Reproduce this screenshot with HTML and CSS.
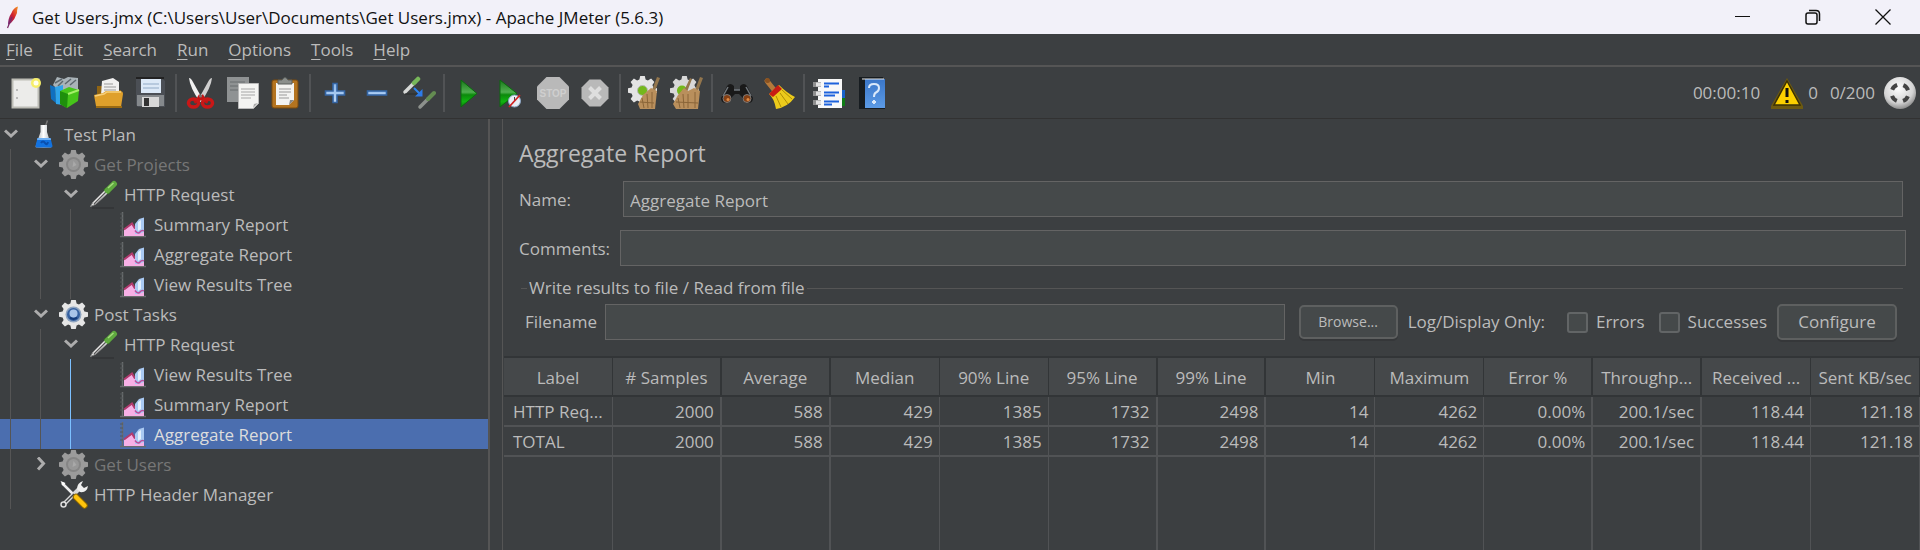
FILE: index.html
```html
<!DOCTYPE html>
<html lang="en">
<head>
<meta charset="utf-8">
<title>Get Users.jmx - Apache JMeter (5.6.3)</title>
<link rel="stylesheet" href="styles.css">
</head>
<body>
<svg class="defs" aria-hidden="true">
  <defs>
    <linearGradient id="g-green" x1="0" y1="0" x2="0" y2="1"><stop offset="0" stop-color="#1a7a1a"/><stop offset=".45" stop-color="#4fae4f"/><stop offset=".55" stop-color="#0b8a0b"/><stop offset=".8" stop-color="#10b410"/><stop offset="1" stop-color="#0c7a0c"/></linearGradient>
    <linearGradient id="g-blue" x1="0" y1="0" x2="0" y2="1"><stop offset="0" stop-color="#8db8ea"/><stop offset="1" stop-color="#bcd8f8"/></linearGradient>
    <linearGradient id="g-cover" x1="0" y1="0" x2="0" y2="1"><stop offset="0" stop-color="#3a76c8"/><stop offset="1" stop-color="#5c9be6"/></linearGradient>
    <radialGradient id="g-ball" cx=".45" cy=".35" r=".65"><stop offset="0" stop-color="#fff"/><stop offset=".7" stop-color="#d4d4d4"/><stop offset="1" stop-color="#8e8e8e"/></radialGradient>
    <linearGradient id="g-glass" x1="0" y1="0" x2="1" y2="0"><stop offset="0" stop-color="#9aa5ad"/><stop offset=".5" stop-color="#fff"/><stop offset="1" stop-color="#a9b4bc"/></linearGradient>
    <linearGradient id="g-feather" x1="1" y1="0" x2="0" y2="1"><stop offset="0" stop-color="#f79a23"/><stop offset=".5" stop-color="#d1202f"/><stop offset="1" stop-color="#6a2a86"/></linearGradient>
    <g id="cog"><path d="M12.200 0h4.600l.8 3.600 2.300 1 3.200-2 3.300 3.300-2 3.200 1 2.300 3.600.8v4.600l-3.600.8-1 2.300 2 3.200-3.300 3.300-3.200-2-2.300 1-.8 3.600h-4.600l-.8-3.600-2.300-1-3.200 2-3.300-3.300 2-3.200-1-2.300L0 16.800v-4.600l3.600-.8 1-2.300-2-3.200 3.300-3.300 3.200 2 2.300-1z"/></g>
    <symbol id="i-chevron" viewBox="0 0 14 14"><path d="M1 3.500l6 5.500 6-5.500" fill="none" stroke="#adadad" stroke-width="3"/></symbol>
    <symbol id="i-chevron-r" viewBox="0 0 14 14"><path d="M4 .500l5.500 6-5.500 6" fill="none" stroke="#adadad" stroke-width="3"/></symbol>
    <symbol id="i-flask" viewBox="0 0 29 29"><path d="M16.500 6l2-5.500" stroke="#777" stroke-width="1.500"/><path d="M11.500 5h6.500v7l4.500 14.500q0 1-1 1h-14q-1 0-1-1L11.500 12z" fill="url(#g-glass)"/><path d="M8.500 18h13l2 8q0 1.500-1.500 1.500H8q-1.500 0-1.500-1.500z" fill="#1272e0"/><path d="M8.500 18h13l.5 2H8z" fill="#6fb1f5"/><path d="M12 23q2-3 4 0t3-1" stroke="#0a4fae" stroke-width="2" fill="none"/></symbol>
    <symbol id="i-cog" viewBox="0 0 29 29"><use href="#cog" fill="#e6e6e6"/><circle cx="14.500" cy="14.500" r="8" fill="#8ea4c0"/><circle cx="14.500" cy="14.500" r="6.500" fill="#35609f"/><circle cx="14.500" cy="13.500" r="4" fill="#a9c4e8"/><path d="M11 17.500q3.500 3 7 0" stroke="#143a78" stroke-width="2" fill="none"/></symbol>
    <symbol id="i-cog-off" viewBox="0 0 29 29"><use href="#cog" fill="#9b9b9b"/><circle cx="14.500" cy="14.500" r="7.500" fill="#858585"/><circle cx="14.500" cy="14.500" r="5.500" fill="#979797"/><path d="M14.500 11l3 4-4 2z" fill="#a9a9a9"/></symbol>
    <symbol id="i-pipette" viewBox="0 0 29 29"><path d="M3 28h22" stroke="#2c2f30"/><path d="M1.500 26.500L4 22 16 10l3 3L7 24z" fill="#e8e8e8" stroke="#8a8a8a"/><path d="M5 24L17 12" stroke="#555" stroke-width="1.200"/><path d="M15.500 8.500l5 5" stroke="#2f6b22" stroke-width="3"/><path d="M18.500 10.500L25 4" stroke="#5faa3f" stroke-width="6" stroke-linecap="round"/><path d="M19 8l5.500-5" stroke="#a5dc7c" stroke-width="1.500"/></symbol>
    <symbol id="i-chart" viewBox="0 0 29 29"><path d="M3.500 2v25M1 26.500h26" stroke="#696c6e" stroke-width="1.500"/><path d="M1 4h3M1 8h3M1 12h3M1 16h3M1 20h3" stroke="#55585a"/><path d="M5 26V20l4-3 4-3 3 5 4 0 5-3v10z" fill="#f7b0e6"/><path d="M5 19.500l4-3 4-3 3 5" fill="none" stroke="#b23a6e" stroke-width="2"/><path d="M16 24V14l4-5 5-1.500V22l-5 2z" fill="#a9c9f2"/><path d="M19 21v-9l3-2v9z" fill="#e2effc"/><path d="M16 20.500q3 4 5 1.500t4-1" fill="none" stroke="#bf4a9a" stroke-width="1.500"/></symbol>
    <symbol id="i-tools" viewBox="0 0 29 29"><path d="M3 3l11 11" stroke="#eee" stroke-width="2.500"/><path d="M1.500 1l5 2-2.500 3z" fill="#fff"/><path d="M4 25L22 7" stroke="#d8d8d8" stroke-width="4"/><path d="M4.500 24.500L15 14" stroke="#3d4042" stroke-width="1.500"/><circle cx="4.500" cy="24.500" r="2.500" fill="#3d4042" stroke="#ddd" stroke-width="1.500"/><path d="M18 9q0-6 6-8l-2 4 3 3 4-2q-1 7-8 6z" fill="#efefef"/><path d="M17 17l8.500 8.500" stroke="#8a6500" stroke-width="6.500" stroke-linecap="round"/><path d="M17 17l8.500 8.500" stroke="#ffc40d" stroke-width="4.500" stroke-linecap="round"/></symbol>
  </defs>
</svg>

<header class="titlebar">
  <svg class="feather" viewBox="0 0 14 24" aria-hidden="true"><path d="M2 20Q2 13 5.500 8q2-5.500 6.500-6.500-1 3-1 6.500-2 6-6 10z" fill="url(#g-feather)"/><path d="M1.500 23L6 12" stroke="#7a2a66" stroke-width="1.200"/></svg>
  <h1 class="window-title">Get Users.jmx (C:\Users\User\Documents\Get Users.jmx) - Apache JMeter (5.6.3)</h1>
  <div class="window-controls">
    <button class="win-btn" aria-label="Minimize"><svg viewBox="0 0 16 16"><path d="M0 7.500h15" stroke="#111"/></svg></button>
    <button class="win-btn" aria-label="Restore"><svg viewBox="0 0 16 16" fill="none" stroke="#111" stroke-width="1.500"><rect x="1" y="4" width="11" height="11" rx="2"/><path d="M4 1.500h7q3.500 0 3.500 3.500v7"/></svg></button>
    <button class="win-btn" aria-label="Close"><svg viewBox="0 0 16 16"><path d="M.5.500l15 15M15.500.500l-15 15" stroke="#111" stroke-width="1.300"/></svg></button>
  </div>
</header>

<nav class="menubar" aria-label="Main menu">
  <button class="menu"><u>F</u>ile</button>
  <button class="menu"><u>E</u>dit</button>
  <button class="menu"><u>S</u>earch</button>
  <button class="menu"><u>R</u>un</button>
  <button class="menu"><u>O</u>ptions</button>
  <button class="menu"><u>T</u>ools</button>
  <button class="menu"><u>H</u>elp</button>
</nav>

<div class="toolbar" role="toolbar" aria-label="Tools">
  <div class="tool-group">
    <button class="tool" aria-label="New"><svg viewBox="0 0 34 34"><rect x="4.500" y="3.500" width="26" height="28" fill="#ececea" stroke="#bdbdb6" stroke-width="2"/><path d="M8 14h2M8 22h2" stroke="#888"/><circle cx="28" cy="7" r="5" fill="#f6ee6a"/><circle cx="28" cy="7" r="2.500" fill="#fffff0"/></svg></button>
    <button class="tool" aria-label="Templates"><svg viewBox="0 0 34 34"><path d="M3 9l4-8 7 2 4-2 10 1v14L14 20z" fill="#a9b3b8"/><path d="M5 7l7-4M15 8l6-5M8 10l5-5M20 9l6-5" stroke="#5d686e" stroke-width="1.500"/><path d="M0 9l5 2 1 16-5-4z" fill="#0f6fc0"/><path d="M5 11l8-2v20l-7-1z" fill="#2fa4ea"/><path d="M10 15l9-4 10 3-1 11-11 7-7-4z" fill="#46c41a"/><path d="M10 15l8 3-1 14-7-4z" fill="#1f8f0c"/><path d="M18 18l11-4" stroke="#a5ef6a" stroke-width="2"/></svg></button>
    <button class="tool" aria-label="Open"><svg viewBox="0 0 34 34"><path d="M5 10h6l2 4h16v4H5z" fill="#8f6414"/><path d="M10 5l11-3 6 4v13H9z" fill="#f0f0f0"/><path d="M12 8h9M12 11h12M12 14h12" stroke="#999"/><path d="M2 19l9-2 3-2h14q3 0 3 3l-2 13q0 1-2 1H6q-2 0-2-2z" fill="#dfa02b"/><path d="M3 20l9-2 3-2h14" stroke="#f7cf7a" stroke-width="1.500" fill="none"/><path d="M4 31h26" stroke="#9a6a12" stroke-width="2"/></svg></button>
    <button class="tool" aria-label="Save"><svg viewBox="0 0 34 34"><path d="M2 3h27l2 2v26H4l-2-2z" fill="#4b4f55"/><path d="M3 19h27v11H3z" fill="#85898c"/><rect x="7" y="3" width="20" height="14" fill="#dce9f7"/><path d="M9 8h16M9 12h16" stroke="#91aac6"/><path d="M2 2h28" stroke="#222" stroke-width="2"/><rect x="8" y="21" width="17" height="10" fill="#d8d8d8"/><rect x="10" y="22" width="5" height="8" fill="#333"/></svg></button>
  </div>
  <div class="tool-group">
    <button class="tool" aria-label="Cut"><svg viewBox="0 0 34 34"><path d="M5 2q2 0 4 4l10 18-3 2Q6 12 5 2z" fill="#f1f1f1"/><path d="M28 2q-2 0-4 4L14 24l3 2Q27 12 28 2z" fill="#cfcfcf"/><path d="M14 20l10 6M20 20L10 26" stroke="#c31414" stroke-width="4"/><ellipse cx="9.500" cy="27" rx="5" ry="4" fill="none" stroke="#c91717" stroke-width="3.500"/><ellipse cx="23.500" cy="27" rx="5" ry="4" fill="none" stroke="#c91717" stroke-width="3.500"/><circle cx="16.500" cy="20" r="1.500" fill="#777"/></svg></button>
    <button class="tool" aria-label="Copy"><svg viewBox="0 0 34 34"><rect x="1" y="1" width="22" height="25" fill="#8f9293"/><path d="M4 6h15M4 10h8M4 14h8" stroke="#696c6e"/><path d="M12.500 7.500h20v20l-5 5h-15z" fill="#f4f4f2" stroke="#b9b9b9"/><path d="M15 13h14M15 16h14M15 19h14M15 22h10" stroke="#a6a6a6"/><path d="M27 32l1-4 4-1z" fill="#aaa"/></svg></button>
    <button class="tool" aria-label="Paste"><svg viewBox="0 0 34 34"><rect x="4" y="4" width="26" height="28" rx="2" fill="#b47420" stroke="#7b4a0c"/><path d="M8 7h18v17l-5 5H8z" fill="#f3f3f1"/><path d="M11 13h12M11 16h12M11 19h8M11 22h10" stroke="#999"/><path d="M21 29l1-5h4z" fill="#888"/><path d="M10 4h4q3-5 6 0h4v4H10z" fill="#8b8f8c" stroke="#5b5f5c"/></svg></button>
  </div>
  <div class="tool-group">
    <button class="tool" aria-label="Expand all"><svg viewBox="0 0 34 34"><path d="M15 7.500h4v7.500h7.500v4H19v7.500h-4V19H7.500v-4H15z" fill="url(#g-blue)" stroke="#3465a4" stroke-width="1.600"/></svg></button>
    <button class="tool" aria-label="Collapse all"><svg viewBox="0 0 34 34"><rect x="7.500" y="15" width="19" height="4" fill="url(#g-blue)" stroke="#3465a4" stroke-width="1.600"/></svg></button>
    <button class="tool" aria-label="Toggle"><svg viewBox="0 0 34 34"><path d="M3 16L13 6" stroke="#d7d9d7" stroke-width="3.500" stroke-linecap="round"/><path d="M12 7l4-4" stroke="#78b85a" stroke-width="4.500" stroke-linecap="round"/><path d="M3 18h14" stroke="#292c2d"/><path d="M12 12l6 6" stroke="#2e86f0" stroke-width="2"/><path d="M20.500 13v7.500H13z" fill="#2e7be8"/><path d="M18 31l8-8" stroke="#8d918d" stroke-width="3.500" stroke-linecap="round"/><path d="M26 23l6-6" stroke="#648c51" stroke-width="4" stroke-linecap="round"/></svg></button>
  </div>
  <div class="tool-group">
    <button class="tool" aria-label="Start"><svg viewBox="0 0 34 34"><path d="M9 4l16 13.500L9 31z" fill="url(#g-green)" stroke="#0a6b0e"/></svg></button>
    <button class="tool" aria-label="Start no pauses"><svg viewBox="0 0 34 34"><path d="M6 4l17 13.500L6 31z" fill="url(#g-green)" stroke="#0a6b0e"/><circle cx="20.500" cy="25" r="6" fill="#e8eef6" stroke="#8ca6c4"/><path d="M20.500 25v-4" stroke="#444"/><path d="M15 31l11-12" stroke="#d02424" stroke-width="1.800"/></svg></button>
    <button class="tool" aria-label="Stop" disabled><svg viewBox="0 0 34 34"><path d="M10.500 1h13l9.500 9.500v13L23.500 33h-13L1 23.500v-13z" fill="#b9b9b9"/><text x="17" y="21" class="stop-text">STOP</text></svg></button>
    <button class="tool" aria-label="Shutdown" disabled><svg viewBox="0 0 34 34"><path d="M11.500 3.500h11l8 8v11l-8 8h-11l-8-8v-11z" fill="#b9b9b9"/><path d="M11.500 11.500l11 11M22.500 11.500l-11 11" stroke="#dedede" stroke-width="4"/></svg></button>
  </div>
  <div class="tool-group">
    <button class="tool" aria-label="Clear"><svg viewBox="0 0 34 34"><use href="#cog" fill="#e4e4e4"/><circle cx="14.500" cy="14.500" r="5" fill="#74b81c" stroke="#b9b9b9"/><path d="M29 1l3 1-5 13-3-1z" fill="#93764d"/><path d="M23 12l6 3-2 18H12l-2-5 5-9z" fill="#b98f5c"/><path d="M14 22l2 10M19 18l1 14M24 16v16M12 26l14 1" stroke="#8a6538"/></svg></button>
    <button class="tool" aria-label="Clear all"><svg viewBox="0 0 34 34"><use href="#cog" fill="#d8d8d8"/><circle cx="12" cy="14.500" r="5" fill="#74b81c"/><path d="M20 2l2 1-5 13-3-1zM30 1l3 1-5 13-3-1z" fill="#93764d"/><path d="M14 12l4 3 6-3 6 3-2 18H6l-3-5 5-9z" fill="#b98f5c"/><path d="M8 22l2 10M13 18l1 14M18 18v14M25 16v16M6 26l22 1" stroke="#8a6538"/></svg></button>
  </div>
  <div class="tool-group">
    <button class="tool" aria-label="Search"><svg viewBox="0 0 34 34"><path d="M7 10q3-4 7 0v4h6v-4q4-4 7 0l6 12q0 5-5 5t-6-6l-3-3h-4l-3 3q-1 6-6 6t-5-5z" fill="#191919"/><path d="M8 11l-5 9M26 11l5 9M14 14h6" stroke="#70777c" stroke-width="1.500"/><circle cx="7" cy="22.500" r="4" fill="#843f14" stroke="#7a7a7a"/><circle cx="27" cy="22.500" r="4" fill="#843f14" stroke="#7a7a7a"/><circle cx="8" cy="23.500" r="1.500" fill="#e08b45"/><circle cx="28" cy="23.500" r="1.500" fill="#e08b45"/></svg></button>
    <button class="tool" aria-label="Reset search"><svg viewBox="0 0 34 34"><path d="M5 5l8 10" stroke="#b5793a" stroke-width="5" stroke-linecap="round"/><circle cx="5.500" cy="4.500" r="2.500" fill="#8a5220"/><path d="M7 18l10-9q8 8 16 12-7 10-19 12Q12 22 7 18z" fill="#eccb1b"/><path d="M14 20l5 11M18 17l8 11M20 14l10 9" stroke="#ae8d05"/><path d="M7 18l9-9 4 4-9 8z" fill="#c71c14"/></svg></button>
  </div>
  <div class="tool-group">
    <button class="tool" aria-label="Function helper"><svg viewBox="0 0 34 34"><rect x="26" y="14" width="7" height="8" fill="#1762c9"/><rect x="26" y="22" width="7" height="8" fill="#0f7c16"/><rect x="6" y="3" width="24" height="29" fill="#f8f8f8"/><path d="M12 7.500h15M12 16.500h15M12 25.500h15" stroke="#1d62dc" stroke-width="2"/><path d="M12 10.500h5M12 19.500h11M12 28.500h8" stroke="#1d62dc" stroke-width="2"/><path d="M1 8.500h8M1 17.500h8M1 26.500h8" stroke="#8f8f8f" stroke-width="5"/><path d="M4 8.500h5M4 17.500h5M4 26.500h5" stroke="#e2e2e2" stroke-width="4"/></svg></button>
    <button class="tool" aria-label="Help"><svg viewBox="0 0 34 34"><path d="M5 1h24v2h2v30H5z" fill="#171c20"/><rect x="11" y="3" width="20" height="29" fill="url(#g-cover)"/><path d="M8 3h22" stroke="#e7e7e7"/><path d="M15 12q0-4 5-4t5 4q0 3-3 4.500-2 1-2 4.500M20 24v4M18 26h4" fill="none" stroke="#d9e8fa" stroke-width="2"/></svg></button>
  </div>
  <div class="status">
    <span class="elapsed">00:00:10</span>
    <button class="tool" aria-label="Show log"><svg viewBox="0 0 34 34"><path d="M17 2L33 30v3H1v-3z" fill="#6d5a10"/><path d="M17 5L30 29H4z" fill="#fbd000" stroke="#3a3005" stroke-width="1.500"/><path d="M17 12v9M17 24v3" stroke="#111" stroke-width="3"/></svg></button>
    <span class="errors">0</span>
    <span class="threads">0/200</span>
    <svg class="indicator" viewBox="0 0 34 34" role="img" aria-label="Idle"><circle cx="17" cy="17" r="16" fill="url(#g-ball)"/><circle cx="17" cy="17" r="8.500" fill="none" stroke="#444" stroke-width="4" stroke-dasharray="7 6.350" stroke-dashoffset="-3.200"/></svg>
  </div>
</div>

<main class="workspace">
  <div class="tree" role="tree" aria-label="Test plan">
    <div class="node" role="treeitem"><svg class="toggle"><use href="#i-chevron"/></svg><svg class="icon"><use href="#i-flask"/></svg><span class="name-text">Test Plan</span></div>
    <div class="node off" role="treeitem"><i class="guide"></i><svg class="toggle"><use href="#i-chevron"/></svg><svg class="icon"><use href="#i-cog-off"/></svg><span class="name-text">Get Projects</span></div>
    <div class="node" role="treeitem"><i class="guide"></i><i class="guide"></i><svg class="toggle"><use href="#i-chevron"/></svg><svg class="icon"><use href="#i-pipette"/></svg><span class="name-text">HTTP Request</span></div>
    <div class="node" role="treeitem"><i class="guide"></i><i class="guide"></i><i class="guide"></i><svg class="toggle"></svg><svg class="icon"><use href="#i-chart"/></svg><span class="name-text">Summary Report</span></div>
    <div class="node" role="treeitem"><i class="guide"></i><i class="guide"></i><i class="guide"></i><svg class="toggle"></svg><svg class="icon"><use href="#i-chart"/></svg><span class="name-text">Aggregate Report</span></div>
    <div class="node" role="treeitem"><i class="guide"></i><i class="guide"></i><i class="guide"></i><svg class="toggle"></svg><svg class="icon"><use href="#i-chart"/></svg><span class="name-text">View Results Tree</span></div>
    <div class="node" role="treeitem"><i class="guide"></i><svg class="toggle"><use href="#i-chevron"/></svg><svg class="icon"><use href="#i-cog"/></svg><span class="name-text">Post Tasks</span></div>
    <div class="node" role="treeitem"><i class="guide"></i><i class="guide"></i><svg class="toggle"><use href="#i-chevron"/></svg><svg class="icon"><use href="#i-pipette"/></svg><span class="name-text">HTTP Request</span></div>
    <div class="node" role="treeitem"><i class="guide"></i><i class="guide"></i><i class="guide active"></i><svg class="toggle"></svg><svg class="icon"><use href="#i-chart"/></svg><span class="name-text">View Results Tree</span></div>
    <div class="node" role="treeitem"><i class="guide"></i><i class="guide"></i><i class="guide active"></i><svg class="toggle"></svg><svg class="icon"><use href="#i-chart"/></svg><span class="name-text">Summary Report</span></div>
    <div class="node selected" role="treeitem" aria-selected="true"><i class="guide"></i><i class="guide"></i><i class="guide active"></i><svg class="toggle"></svg><svg class="icon"><use href="#i-chart"/></svg><span class="name-text">Aggregate Report</span></div>
    <div class="node off" role="treeitem"><i class="guide"></i><svg class="toggle"><use href="#i-chevron-r"/></svg><svg class="icon"><use href="#i-cog-off"/></svg><span class="name-text">Get Users</span></div>
    <div class="node" role="treeitem"><i class="guide"></i><svg class="toggle"></svg><svg class="icon"><use href="#i-tools"/></svg><span class="name-text">HTTP Header Manager</span></div>
  </div>

  <section class="panel">
    <form class="form">
      <h2 class="panel-title">Aggregate Report</h2>
      <div class="field name"><label for="name">Name:</label><input class="text" id="name" type="text" value="Aggregate Report"></div>
      <div class="field comments"><label for="comments">Comments:</label><input class="text" id="comments" type="text"></div>
      <fieldset class="file-group">
        <legend>Write results to file / Read from file</legend>
        <div class="file-row">
          <label for="filename">Filename</label>
          <input class="text filename" id="filename" type="text">
          <button class="btn browse" type="button">Browse...</button>
          <span class="log-label">Log/Display Only:</span>
          <label class="check"><input type="checkbox"> Errors</label>
          <label class="check"><input type="checkbox"> Successes</label>
          <button class="btn configure" type="button">Configure</button>
        </div>
      </fieldset>
    </form>
    <table class="results">
      <thead>
        <tr><th>Label</th><th># Samples</th><th>Average</th><th>Median</th><th>90% Line</th><th>95% Line</th><th>99% Line</th><th>Min</th><th>Maximum</th><th>Error %</th><th>Throughp...</th><th>Received ...</th><th>Sent KB/sec</th></tr>
      </thead>
      <tbody>
        <tr><td>HTTP Req...</td><td>2000</td><td>588</td><td>429</td><td>1385</td><td>1732</td><td>2498</td><td>14</td><td>4262</td><td>0.00%</td><td>200.1/sec</td><td>118.44</td><td>121.18</td></tr>
        <tr><td>TOTAL</td><td>2000</td><td>588</td><td>429</td><td>1385</td><td>1732</td><td>2498</td><td>14</td><td>4262</td><td>0.00%</td><td>200.1/sec</td><td>118.44</td><td>121.18</td></tr>
        <tr class="filler"><td></td><td></td><td></td><td></td><td></td><td></td><td></td><td></td><td></td><td></td><td></td><td></td><td></td></tr>
      </tbody>
    </table>
  </section>
</main>
</body>
</html>
```
FILE: styles.css
```css
* { box-sizing: border-box; }

body {
  margin: 0;
  min-height: 100vh;
  display: flex;
  flex-direction: column;
  background: #3c3f41;
  color: #bbbbbb;
  font: 17px/24px "Open Sans", "Noto Sans", sans-serif;
}

button, input { font: inherit; color: inherit; }
button { padding: 0; border: 0; background: none; }
.defs { position: absolute; width: 0; height: 0; }

/* Window frame */
.titlebar {
  display: flex;
  align-items: center;
  height: 34px;
  padding: 0 2px 0 6px;
  background: #f2f1f9;
  color: #111;
}
.feather { width: 14px; height: 24px; }
.window-title {
  margin: 0 0 0 12px;
  padding-top: 1px;
  font-size: 17px;
  font-weight: 400;
  white-space: nowrap;
}
.window-controls { display: flex; margin-left: auto; }
.win-btn {
  display: grid;
  place-items: center;
  width: 70px;
  height: 34px;
}
.win-btn svg { width: 16px; height: 16px; }

.menubar {
  display: flex;
  gap: 20px;
  height: 33px;
  padding: 1px 6px 0;
  border-bottom: 2px solid #555555;
}
.menu u { text-underline-offset: 3px; text-decoration-thickness: 1px; }

.toolbar {
  display: flex;
  align-items: center;
  height: 52px;
  padding-left: 1px;
  border-bottom: 1px solid #323232;
}
.tool-group { display: flex; padding: 0 3px; }
.tool-group + .tool-group { border-left: 2px solid #515355; }
.tool-group, .status { height: 38px; align-items: center; }
.tool { display: grid; place-items: center; width: 42px; height: 38px; }
.tool svg, .indicator { width: 34px; height: 34px; }
.stop-text { font: 700 10px "Liberation Sans", sans-serif; fill: #cfcfcf; text-anchor: middle; }
.status { display: flex; margin-left: auto; padding-right: 3px; }
.elapsed { margin-right: 6px; }
.threads { margin: 0 8px 0 12px; }

/* Tree */
.workspace { flex: 1; display: flex; }
.tree { flex: 0 0 490px; border-right: 2px solid #555555; }
.node { display: flex; align-items: center; height: 30px; white-space: nowrap; }
.node.off { color: #777777; }
.node.selected { background: #4b6eaf; color: #dddddd; }
.name-text { padding-top: 2px; }
.guide { align-self: stretch; width: 20px; margin-left: 10px; border-left: 1px solid #555555; }
.guide.active { border-color: #7cc0ff; }
.toggle { width: 14px; height: 14px; margin: 0 11px 0 4px; }
.icon { width: 29px; height: 29px; margin-right: 6px; }

/* Form */
.panel {
  flex: 1;
  min-width: 0;
  display: flex;
  flex-direction: column;
  margin-left: 12px;
  border-left: 1px solid #555555;
}
.form { padding: 20px 14px 16px 16px; }
.panel-title { margin: 0 0 13px; font-size: 23px; font-weight: 400; line-height: 29px; }
.field { display: flex; align-items: center; }
.field label { flex: none; width: 101px; padding-top: 2px; }
.name { padding-right: 3px; margin-bottom: 13px; }
.name label { width: 104px; }
.comments { margin-bottom: 10px; }
.text {
  flex: 1;
  min-width: 0;
  height: 36px;
  padding: 2px 6px 0;
  background: #45494a;
  border: 1px solid #646464;
  outline: 0;
}
.file-group { margin: 0 3px 0 2px; padding: 0 6px 0 4px; border: 0; border-top: 1px solid #555555; }
.file-group legend { margin-left: 2px; padding: 0 2px; }
.file-row { display: flex; align-items: center; padding-top: 4px; }
.filename { margin-left: 8px; }
.btn {
  background: #45494a;
  border: 2px solid #5e6060;
  border-radius: 5px;
  box-shadow: 0 2px 0 #353739;
}
.browse { width: 99px; height: 34px; margin: 0 10px 0 14px; font-size: 14px; }
.configure { width: 120px; height: 36px; margin-left: 10px; }
.log-label { margin-right: 22px; }
.check { display: flex; align-items: center; gap: 8px; }
.check + .check { margin-left: 14px; }
.check input {
  appearance: none;
  width: 21px;
  height: 21px;
  margin: 0;
  background: #45494a;
  border: 2px solid #626566;
  border-radius: 3px;
}

/* Results table */
.results {
  flex: 1;
  width: calc(100% - 1px);
  margin-left: 1px;
  table-layout: fixed;
  border-collapse: separate;
  border-spacing: 0;
}
.results th {
  height: 41px;
  padding: 2px 0 0;
  background: #45484a;
  border: solid #323537;
  border-width: 2px 1px 2px 0;
  font-weight: 400;
}
.results td {
  height: 30px;
  padding: 2px 6px 0 9px;
  border: solid #515355;
  border-width: 0 1px 2px 0;
  text-align: right;
  white-space: nowrap;
}
.results td:first-child { padding-right: 0; text-align: left; }
.results th:nth-child(4n+2), .results td:nth-child(4n+2),
.results th:nth-child(4n+3), .results td:nth-child(4n+3) { border-right-width: 2px; }
.results .filler td { height: auto; border-bottom: 0; }
```
